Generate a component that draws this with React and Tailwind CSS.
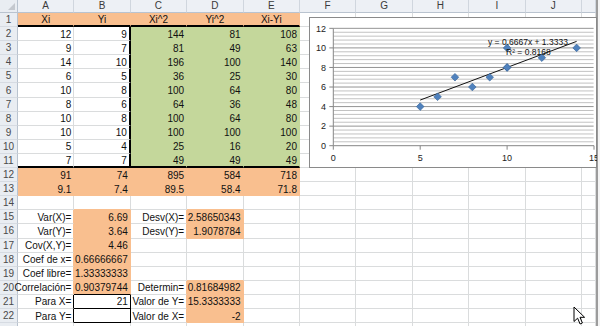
import React from "react";

const COLS = ["A", "B", "C", "D", "E", "F", "G", "H", "I", "J", ""];
const NROWS = 23;

const FILL = { W: "bg-white", O: "bg-[#F9BF8F]", G: "bg-[#C4D79B]" };
const BR = { W: "border-r-[#DADCDD]", O: "border-r-[#F9BF8F]", G: "border-r-[#C4D79B]", K: "border-r-black" };
const BB = { W: "border-b-[#DADCDD]", O: "border-b-[#F9BF8F]", G: "border-b-[#C4D79B]", K: "border-b-black" };
const ALIGN = { r: "justify-end pr-[2px]", c: "justify-center", l: "justify-start pl-[2px]" };

function buildSheet() {
  const m = Array.from({ length: NROWS }, () =>
    Array.from({ length: 11 }, () => ({ v: "", f: "W", a: "r" }))
  );
  const set = (r, c, v, f = "W", a = "r", extra = {}) => {
    m[r - 1][c] = { v, f, a, ...extra };
  };
  ["Xi", "Yi", "Xi^2", "Yi^2", "Xi-Yi"].forEach((t, i) => set(1, i, t, "O", "c", { bb2: true }));
  const data = [[12, 9], [9, 7], [14, 10], [6, 5], [10, 8], [8, 6], [10, 8], [10, 10], [5, 4], [7, 7]];
  data.forEach(([x, y], i) => {
    const r = i + 2;
    const last = r === 11;
    set(r, 0, String(x), "W", "r", { bb2: last });
    set(r, 1, String(y), "W", "r", { br2: true, bb2: last });
    set(r, 2, String(x * x), "G", "r", { bb2: last });
    set(r, 3, String(y * y), "G", "r", { bb2: last });
    set(r, 4, String(x * y), "G", "r", { bb2: last });
  });
  ["91", "74", "895", "584", "718"].forEach((t, i) => set(12, i, t, "O"));
  ["9.1", "7.4", "89.5", "58.4", "71.8"].forEach((t, i) => set(13, i, t, "O"));

  set(15, 0, "Var(X)=");
  set(15, 1, "6.69", "O");
  set(15, 2, "Desv(X)=");
  set(15, 3, "2.58650343", "O");
  set(16, 0, "Var(Y)=");
  set(16, 1, "3.64", "O");
  set(16, 2, "Desv(Y)=");
  set(16, 3, "1.9078784", "O");
  set(17, 0, "Cov(X,Y)=");
  set(17, 1, "4.46", "O");
  set(18, 0, "Coef de x=");
  set(18, 1, "0.66666667", "O");
  set(19, 0, "Coef libre=");
  set(19, 1, "1.33333333", "O");
  set(20, 0, "Correlación=");
  set(20, 1, "0.90379744", "O", "r", { bbK: true });
  set(20, 2, "Determin=");
  set(20, 3, "0.81684982", "O");
  set(21, 0, "Para X=", "W", "r", { brK: true });
  set(21, 1, "21", "W", "r", { brK: true, bbK: true });
  set(21, 2, "Valor de Y=");
  set(21, 3, "15.3333333", "O");
  set(22, 0, "Para Y=", "W", "r", { brK: true });
  set(22, 1, "", "W", "r", { brK: true, bbK: true });
  set(22, 2, "Valor de X=");
  set(22, 3, "-2", "O");
  return m;
}

const SHEET = buildSheet();

function cellClass(r, c) {
  const cell = SHEET[r][c];
  const right = c < 10 ? SHEET[r][c + 1] : null;
  const below = r < NROWS - 1 ? SHEET[r + 1][c] : null;
  let rc;
  if (cell.br2 || cell.brK) rc = "K";
  else if (cell.f !== "W") rc = cell.f;
  else if (right && right.f !== "W") rc = right.f;
  else rc = "W";
  let bc;
  if (cell.bb2 || cell.bbK) bc = "K";
  else if (cell.f !== "W") bc = cell.f;
  else if (below && below.f !== "W") bc = below.f;
  else bc = "W";
  return [
    "flex items-center pt-[2px] whitespace-nowrap leading-none text-[10px] text-[#111]",
    cell.br2 ? "border-r-2" : "border-r",
    cell.bb2 ? "border-b-2" : "border-b",
    BR[rc],
    BB[bc],
    FILL[cell.f],
    ALIGN[cell.a],
  ].join(" ");
}

const X0 = 333.3;
const SX = 17.38;
const Y0 = 145.7;
const SY = 9.78;
const px = (x) => X0 + SX * x;
const py = (y) => Y0 - SY * y;

function Chart() {
  const minor = [];
  const major = [];
  for (let k = 0; k <= 30; k++) {
    const y = py(k * 0.4);
    if (k % 5 === 0) major.push(y);
    else minor.push(y);
  }
  const pts = [[12, 9], [9, 7], [14, 10], [6, 5], [10, 8], [8, 6], [10, 8], [10, 10], [5, 4], [7, 7]];
  const font = "'Liberation Sans', Arial, sans-serif";
  return (
    <div className="absolute left-[309px] top-[17px] w-[288px] h-[151px]">
      <svg width="288" height="151" viewBox="309 17 288 151">
        <rect x="309.5" y="17.5" width="287" height="150" fill="#fff" stroke="#8a8a8a" strokeWidth="1" />
        {minor.map((y, i) => (
          <line key={"m" + i} x1={X0} x2={593.6} y1={y} y2={y} stroke="#c2c2c2" strokeWidth="1" />
        ))}
        {major.slice(1).map((y, i) => (
          <line key={"M" + i} x1={X0} x2={593.6} y1={y} y2={y} stroke="#949494" strokeWidth="1" />
        ))}
        <line x1={X0} x2={X0} y1={py(12)} y2={Y0} stroke="#868686" strokeWidth="1" />
        {major.map((y, i) => (
          <line key={"t" + i} x1={X0 - 4} x2={X0} y1={y} y2={y} stroke="#868686" strokeWidth="1" />
        ))}
        <line x1={X0} x2={px(15)} y1={Y0} y2={Y0} stroke="#868686" strokeWidth="1" />
        {[0, 5, 10, 15].map((v) => (
          <line key={"xt" + v} x1={px(v)} x2={px(v)} y1={Y0} y2={Y0 + 4} stroke="#868686" strokeWidth="1" />
        ))}
        {[0, 2, 4, 6, 8, 10, 12].map((v) => (
          <text key={"yl" + v} x={326} y={py(v) + 3.2} fontSize="9" textAnchor="end" fill="#222" fontFamily={font}>
            {v}
          </text>
        ))}
        {[0, 5, 10, 15].map((v) => (
          <text key={"xl" + v} x={px(v)} y={160.5} fontSize="9" textAnchor="middle" fill="#222" fontFamily={font}>
            {v}
          </text>
        ))}
        <line x1={px(5)} y1={py(0.6667 * 5 + 1.3333)} x2={px(14)} y2={py(0.6667 * 14 + 1.3333)} stroke="#111" strokeWidth="1" />
        {pts.map(([x, y], i) => {
          const cx = px(x);
          const cy = py(y);
          return (
            <path
              key={"p" + i}
              d={`M${cx} ${cy - 3.8}L${cx + 3.8} ${cy}L${cx} ${cy + 3.8}L${cx - 3.8} ${cy}Z`}
              fill="#4F81BD"
              stroke="#3E6A9E"
              strokeWidth="0.7"
            />
          );
        })}
        <text x={488} y={44.6} fontSize="8.5" fill="#111" fontFamily={font}>
          y = 0.6667x + 1.3333
        </text>
        <text x={506} y={55.2} fontSize="8.5" fill="#111" fontFamily={font}>
          R² = 0.8168
        </text>
      </svg>
    </div>
  );
}

function Cursor() {
  return (
    <div className="absolute left-[573px] top-[306px]">
      <svg width="14" height="20" viewBox="0 0 14 20">
        <polygon
          points="1,1 1,15.5 4.6,12.2 7.1,18 9.4,17 7,11.3 11.6,11.3"
          fill="#fff"
          stroke="#000"
          strokeWidth="1"
          strokeLinejoin="round"
        />
      </svg>
    </div>
  );
}

export default function App() {
  return (
    <div className="relative w-[600px] h-[326px] overflow-hidden bg-white flex font-['Liberation_Sans',Arial,sans-serif]">
      <div className="w-[596px] h-[326px] overflow-hidden">
        <div className="grid grid-cols-[18px_repeat(10,56.4px)_1fr] grid-rows-[13px_repeat(23,14.1px)]">
          <div className="relative bg-[#E9EDF2] border-r border-b border-r-[#B9C3CF] border-b-[#B9C3CF]">
            <svg className="absolute right-[2px] bottom-[2px]" width="7" height="7" viewBox="0 0 7 7">
              <polygon points="7,0 7,7 0,7" fill="#C4C8CE" />
            </svg>
          </div>
          {COLS.map((c, i) => (
            <div
              key={"h" + i}
              className="flex items-center justify-center leading-none text-[10px] text-[#3a3a3a] bg-[#EDF0F5] border-r border-b border-r-[#D0D6DE] border-b-[#B9C3CF]"
            >
              {c}
            </div>
          ))}
          {SHEET.map((row, r) => (
            <React.Fragment key={"r" + r}>
              <div className="flex items-center justify-center pt-[1px] leading-none text-[10px] text-[#4a4a4a] bg-[#E9EDF2] border-r border-b border-r-[#B9C3CF] border-b-[#D6DBE2]">
                {r < 22 ? r + 1 : ""}
              </div>
              {row.map((cell, c) => (
                <div key={"c" + r + "-" + c} className={cellClass(r, c)}>
                  {cell.v}
                </div>
              ))}
            </React.Fragment>
          ))}
        </div>
      </div>
      <div className="w-[2px] h-[326px] bg-[#9c9c9c]" />
      <div className="flex-1 h-[326px] bg-[#f4f4f4]" />
      <Chart />
      <Cursor />
    </div>
  );
}
